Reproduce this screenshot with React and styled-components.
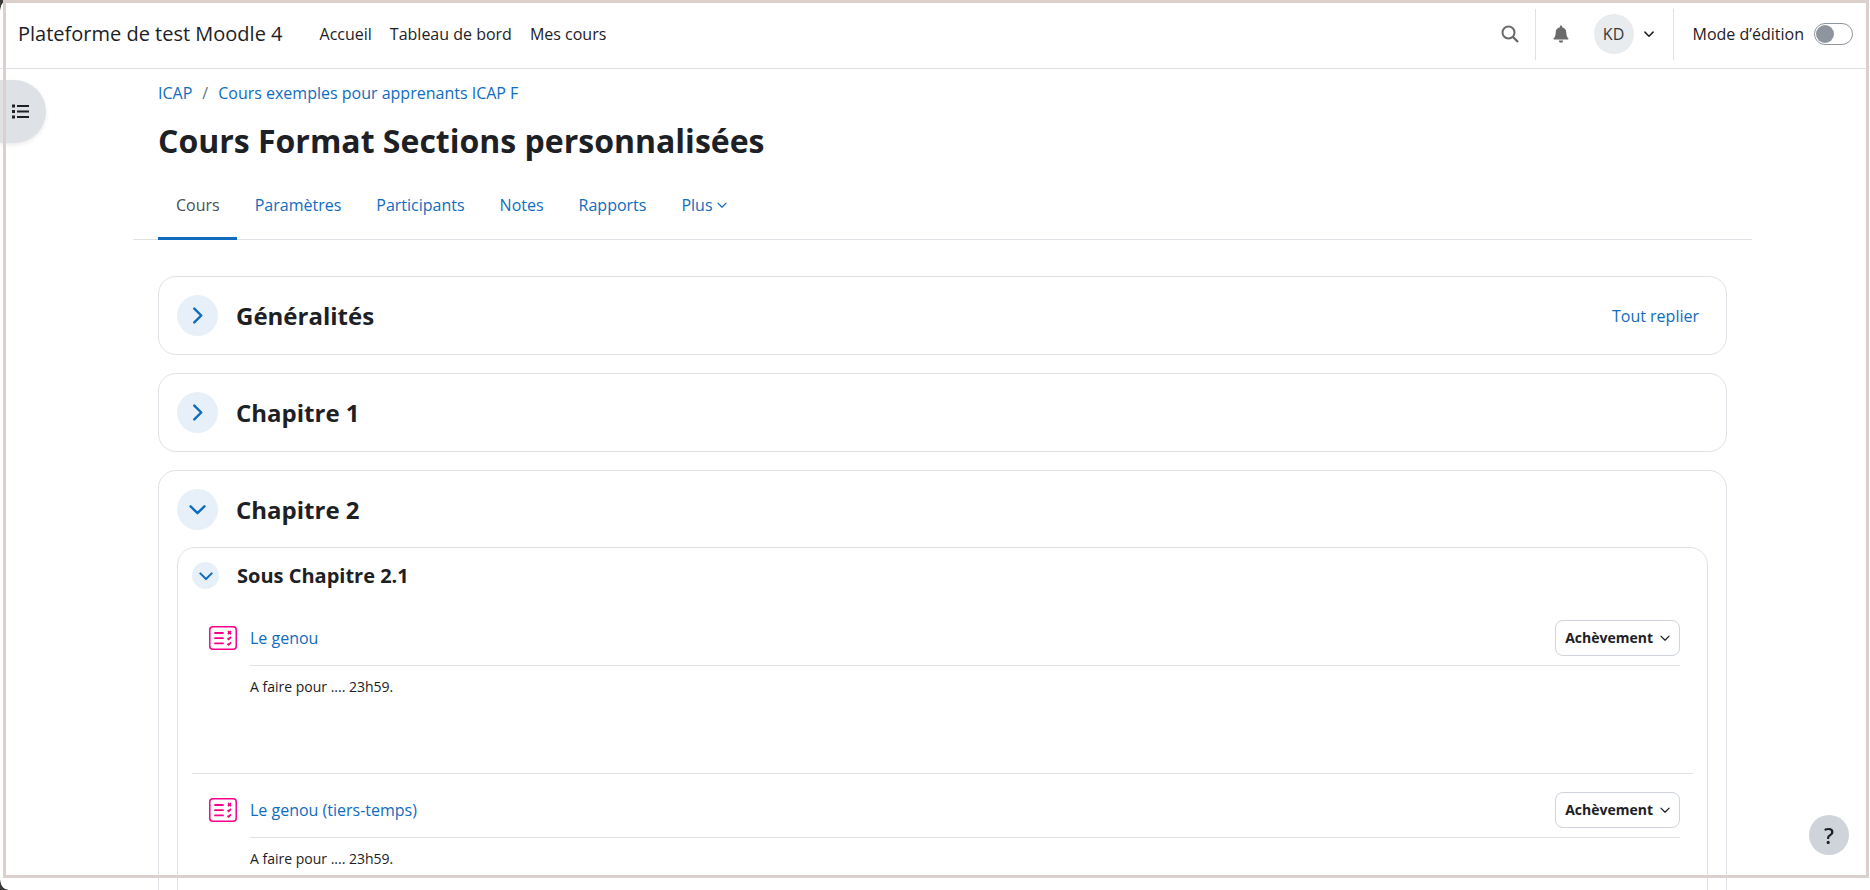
import React, { useState } from 'react';
import styled, { createGlobalStyle } from 'styled-components';

const activities = [
    { id: 1, name: 'Le genou', text: 'A faire pour .... 23h59.' },
    { id: 2, name: 'Le genou (tiers-temps)', text: 'A faire pour .... 23h59.' },
];

const tabs = ['Paramètres', 'Participants', 'Notes', 'Rapports'];

const Chevron = ({ size = 10, right, weight = 2 }) => (
    <svg width={size} height={size} viewBox="0 0 16 16" fill="none" stroke="currentColor"
        strokeWidth={weight} strokeLinecap="round" strokeLinejoin="round" aria-hidden="true">
        <path d={right ? 'M5 1.500 11.500 8 5 14.500' : 'M1.500 5 8 11.500 14.500 5'} />
    </svg>
);

const QuizIcon = () => (
    <svg width="28" height="24" viewBox="0 0 28 24" fill="none" stroke="#f7008b" aria-hidden="true">
        <rect x="0.8" y="0.8" width="26.4" height="22.4" rx="3" strokeWidth="1.5" />
        <path d="M6 7h8M6 12.200h8M6 17.400h8" strokeWidth="1.800" strokeLinecap="round" />
        <path d="M19 5.200l3 3m0-3l-3 3M18.500 12.200l1.200 1 2.300-2.300M18.500 17.700l1.200 1 2.300-2.300" strokeWidth="1.800" />
    </svg>
);

const Toggle = ({ open, small, label, onClick }) => (
    <RoundButton type="button" $small={small} aria-expanded={open} aria-label={label} onClick={onClick}>
        <Chevron size={small ? 14 : 17} weight={2.3} right={!open} />
    </RoundButton>
);

const App = () => {
    const [edition, setEdition] = useState(false);
    const [open, setOpen] = useState({ generalites: false, chapitre1: false, chapitre2: true, sous: true });

    const toggle = (key) => setOpen(prev => ({ ...prev, [key]: !prev[key] }));

    return (
        <Page>
            <GlobalStyle />
            <Header>
                <Brand href="#">Plateforme de test Moodle 4</Brand>
                <MainNav>
                    <a href="#">Accueil</a>
                    <a href="#">Tableau de bord</a>
                    <a href="#">Mes cours</a>
                </MainNav>
                <UserNav>
                    <IconButton type="button" aria-label="Rechercher">
                        <svg width="18" height="18" viewBox="0 0 18 18" fill="none" stroke="currentColor" strokeWidth="2">
                            <circle cx="7.500" cy="7.500" r="6" />
                            <path d="M12 12l5 5" strokeWidth="2.400" />
                        </svg>
                    </IconButton>
                    <Separator />
                    <IconButton type="button" aria-label="Notifications">
                        <svg width="16" height="18" viewBox="0 0 16 18" fill="currentColor">
                            <path d="M8 0.500c.7 0 1.100.5 1.100 1.100v.6c2.500.5 4.200 2.600 4.200 5.200 0 3.200.8 4.700 2 5.800.4.500.2 1.300-.6 1.300H1.300c-.8 0-1-.8-.6-1.300 1.200-1.100 2-2.600 2-5.800 0-2.600 1.700-4.700 4.200-5.200v-.6C6.900 1 7.300.5 8 .5zM5.800 15.600h4.400a2.200 2.200 0 0 1-4.400 0z" />
                        </svg>
                    </IconButton>
                    <UserMenu type="button" aria-label="Menu utilisateur">
                        <Avatar>KD</Avatar>
                        <Chevron weight={2.4} />
                    </UserMenu>
                    <Separator />
                    <EditMode>
                        Mode d’édition
                        <Switch type="checkbox" role="switch" checked={edition} onChange={() => setEdition(!edition)} />
                    </EditMode>
                </UserNav>
            </Header>

            <DrawerButton type="button" aria-label="Ouvrir l’index du cours">
                <svg width="17" height="15" viewBox="0 0 17 15" fill="#1d2125">
                    <path d="M0 .5h3v3H0zM0 6h3v3H0zM0 11.500h3v3H0zM5 1h12v2H5zM5 6.500h12v2H5zM5 12h12v2H5z" />
                </svg>
            </DrawerButton>

            <Main>
                <Breadcrumb aria-label="Fil d’Ariane">
                    <a href="#">ICAP</a>
                    <span>/</span>
                    <a href="#">Cours exemples pour apprenants ICAP F</a>
                </Breadcrumb>
                <Title>Cours Format Sections personnalisées</Title>
                <Tabs>
                    <Tab href="#" $active aria-current="page">Cours</Tab>
                    {tabs.map((tab) => <Tab href="#" key={tab}>{tab}</Tab>)}
                    <Tab href="#">Plus <Chevron /></Tab>
                </Tabs>

                <Sections>
                    <Section>
                        <SectionHead>
                            <Toggle open={open.generalites} label="Généralités" onClick={() => toggle('generalites')} />
                            <h2>Généralités</h2>
                            <CollapseAll href="#">Tout replier</CollapseAll>
                        </SectionHead>
                    </Section>
                    <Section>
                        <SectionHead>
                            <Toggle open={open.chapitre1} label="Chapitre 1" onClick={() => toggle('chapitre1')} />
                            <h2>Chapitre 1</h2>
                        </SectionHead>
                    </Section>
                    <Section>
                        <SectionHead>
                            <Toggle open={open.chapitre2} label="Chapitre 2" onClick={() => toggle('chapitre2')} />
                            <h2>Chapitre 2</h2>
                        </SectionHead>
                        {open.chapitre2 && <SubSection>
                            <SubHead>
                                <Toggle small open={open.sous} label="Sous Chapitre 2.1" onClick={() => toggle('sous')} />
                                <h3>Sous Chapitre 2.1</h3>
                            </SubHead>
                            {open.sous && <ActivityList>
                                {activities.map((activity) => (
                                    <Activity key={activity.id}>
                                        <QuizIcon />
                                        <ActivityBody>
                                            <ActivityTop>
                                                <a href="#">{activity.name}</a>
                                                <CompletionButton type="button">
                                                    Achèvement <Chevron />
                                                </CompletionButton>
                                            </ActivityTop>
                                            <p>{activity.text}</p>
                                        </ActivityBody>
                                    </Activity>
                                ))}
                            </ActivityList>}
                        </SubSection>}
                    </Section>
                </Sections>
            </Main>

            <HelpButton type="button" aria-label="Aide">?</HelpButton>
            <Corner />
            <Corner $bottom />
            <Frame />
        </Page>
    );
}

const GlobalStyle = createGlobalStyle`
    * {
        box-sizing: border-box;
    }

    body {
        margin: 0;
        background: #fff;
        color: #1d2125;
        font-family: "Open Sans", "Noto Sans", sans-serif;
        font-size: 16px;
        line-height: 24px;
    }

    a {
        color: #0f6cbf;
        text-decoration: none;
    }

    button {
        border: 0;
        padding: 0;
        color: inherit;
        font: inherit;
        cursor: pointer;
    }

    h1, h2, h3, p, ul {
        margin: 0;
        padding: 0;
    }
`

const Page = styled.div`
    height: 100vh;
    overflow: hidden;
`

const Header = styled.header`
    display: flex;
    align-items: center;
    height: 69px;
    padding: 0 17px 0 18px;
    border-bottom: 1px solid #dee2e6;
`

const Brand = styled.a`
    margin-right: 37px;
    color: #1d2125;
    font-size: 20px;
`

const MainNav = styled.nav`
    display: flex;
    gap: 18px;

    a {
        color: #1d2125;
    }
`

const UserNav = styled.div`
    display: flex;
    align-items: center;
    margin-left: auto;
`

const IconButton = styled.button`
    display: flex;
    align-items: center;
    justify-content: center;
    width: 50px;
    height: 40px;
    background: none;
    color: #6a6a6a;
`

const Separator = styled.div`
    width: 1px;
    height: 51px;
    background: #dee2e6;
`

const UserMenu = styled.button`
    display: flex;
    align-items: center;
    gap: 10px;
    padding: 0 19px 0 8px;
    background: none;
`

const Avatar = styled.span`
    width: 40px;
    height: 40px;
    border-radius: 50%;
    background: #e9ecef;
    color: #343a40;
    line-height: 40px;
    text-align: center;
`

const EditMode = styled.label`
    display: flex;
    align-items: center;
    gap: 10px;
    padding-left: 19px;
`

const Switch = styled.input`
    appearance: none;
    display: flex;
    align-items: center;
    width: 39px;
    height: 22px;
    margin: 0;
    padding: 1px;
    border: 1px solid #8f959e;
    border-radius: 11px;
    background: #fff;

    &::before {
        content: '';
        width: 18px;
        height: 18px;
        border-radius: 50%;
        background: #8f959e;
    }

    &:checked {
        justify-content: flex-end;
    }
`

const DrawerButton = styled.button`
    position: fixed;
    top: 80px;
    left: 0;
    display: flex;
    align-items: center;
    width: 46px;
    height: 63px;
    padding-left: 12px;
    border-radius: 0 32px 32px 0;
    background: #dee2e6;
    box-shadow: 0 2px 4px rgba(0, 0, 0, 0.08);
`

const Main = styled.main`
    margin: 0 118px 0 133px;
    padding-top: 12px;
`

const Breadcrumb = styled.nav`
    display: flex;
    gap: 10px;
    padding: 0 25px;

    span {
        color: #6a737b;
    }
`

const Title = styled.h1`
    padding: 16px 25px 0;
    font-size: 32px;
    line-height: 40px;
`

const Tabs = styled.nav`
    display: flex;
    margin-top: 8px;
    padding: 0 25px;
    border-bottom: 1px solid #dee2e6;
`

const Tab = styled.a`
    display: flex;
    align-items: center;
    gap: 4px;
    height: 71px;
    margin-bottom: -1px;
    padding: 3px 17px 0 18px;
    border-bottom: 3px solid ${props => props.$active ? '#0f6cbf' : 'transparent'};
    color: ${props => props.$active ? '#495057' : '#0f6cbf'};
`

const Sections = styled.div`
    display: flex;
    flex-direction: column;
    gap: 18px;
    padding: 36px 25px;
`

const Section = styled.section`
    padding: 18px;
    border: 1px solid #dee2e6;
    border-radius: 18px;
`

const SectionHead = styled.div`
    display: flex;
    align-items: center;
    gap: 18px;

    h2 {
        font-size: 24px;
        line-height: 32px;
    }
`

const CollapseAll = styled.a`
    margin-left: auto;
    margin-right: 9px;
`

const RoundButton = styled.button`
    display: flex;
    align-items: center;
    justify-content: center;
    flex: none;
    width: ${props => props.$small ? '27px' : '41px'};
    height: ${props => props.$small ? '27px' : '41px'};
    border-radius: 50%;
    background: #e7f0f9;
    color: #0f6cbf;
`

const SubSection = styled.div`
    margin-top: 17px;
    padding: 14px;
    border: 1px solid #dee2e6;
    border-radius: 18px;
`

const SubHead = styled.div`
    display: flex;
    align-items: center;
    gap: 18px;

    h3 {
        font-size: 20px;
        line-height: 27px;
    }
`

const ActivityList = styled.ul`
    padding-top: 13px;
    list-style: none;
`

const Activity = styled.li`
    display: flex;
    gap: 13px;
    min-height: 172px;
    padding: 18px 13px 0 17px;
    border-bottom: 1px solid #dee2e6;

    > svg {
        flex: none;
        margin-top: 6px;
    }
`

const ActivityBody = styled.div`
    flex: 1;

    p {
        padding-top: 9px;
        font-size: 14px;
    }
`

const ActivityTop = styled.div`
    display: flex;
    align-items: center;
    justify-content: space-between;
    padding-bottom: 9px;
    border-bottom: 1px solid #dee2e6;
`

const CompletionButton = styled.button`
    display: flex;
    align-items: center;
    gap: 7px;
    height: 36px;
    padding: 0 9px;
    border: 1px solid #ced4da;
    border-radius: 8px;
    background: #fff;
    font-size: 14px;
    font-weight: bold;
`

const HelpButton = styled.button`
    position: fixed;
    right: 21px;
    bottom: 35px;
    width: 40px;
    height: 40px;
    border-radius: 50%;
    background: #ced4da;
    font-size: 22px;
    font-weight: 600;
`

const Corner = styled.div`
    position: fixed;
    left: 0;
    ${props => props.$bottom ? 'bottom: 0;' : 'top: 0;'}
    width: 8px;
    height: 10px;
    background: radial-gradient(ellipse 8px 10px at ${props => props.$bottom ? '100% 0' : '100% 100%'}, transparent 92%, #3a3a3a 100%);
    pointer-events: none;
`

const Frame = styled.div`
    position: fixed;
    inset: 0 1px 12px 3px;
    border: 3px solid #dcd0cc;
    pointer-events: none;
`

export default App;
